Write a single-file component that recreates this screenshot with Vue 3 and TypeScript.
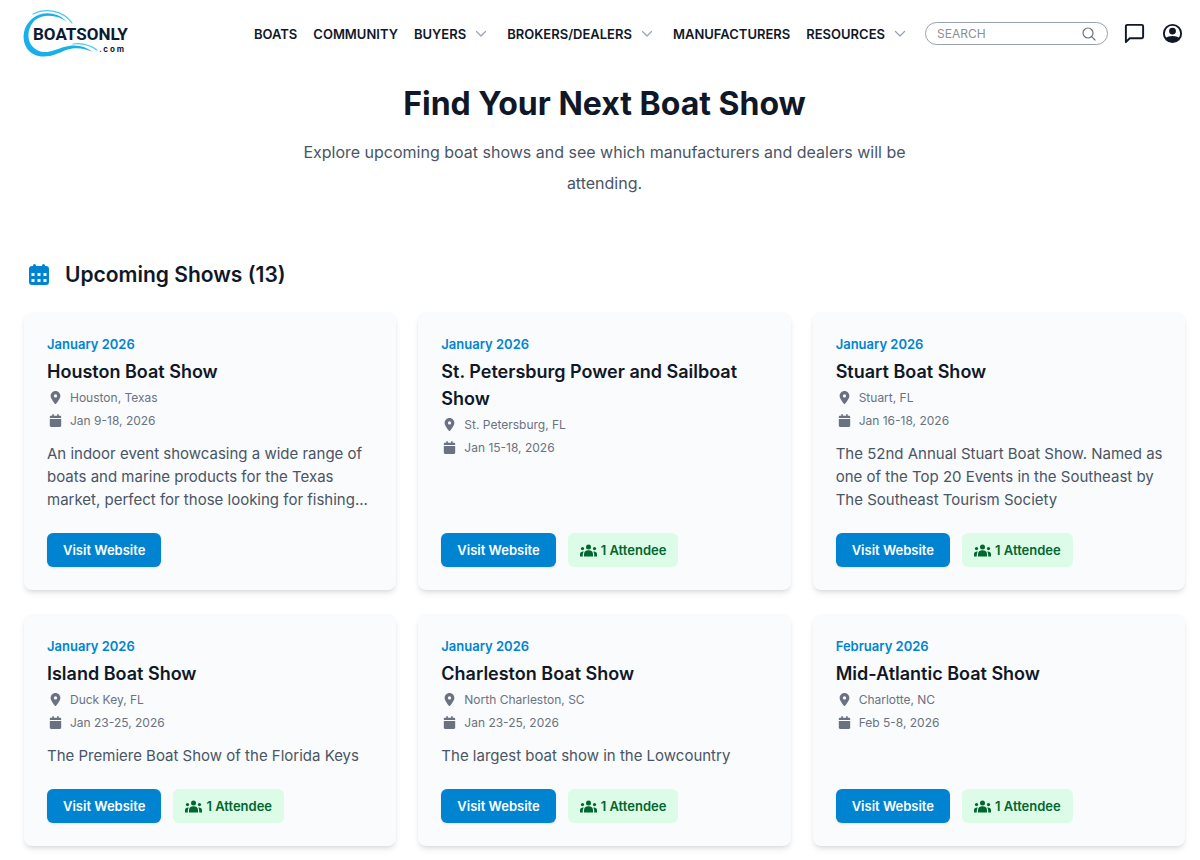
<script setup lang="ts">
import { ref } from 'vue'

interface NavItem {
  label: string
  menu: boolean
}

interface Show {
  month: string
  title: string
  place: string
  dates: string
  text: string
  attendees: number
}

const query = ref('')

const nav: NavItem[] = [
  { label: 'BOATS', menu: false },
  { label: 'COMMUNITY', menu: false },
  { label: 'BUYERS', menu: true },
  { label: 'BROKERS/DEALERS', menu: true },
  { label: 'MANUFACTURERS', menu: false },
  { label: 'RESOURCES', menu: true },
]

const total = 13

const shows: Show[] = [
  {
    month: 'January 2026',
    title: 'Houston Boat Show',
    place: 'Houston, Texas',
    dates: 'Jan 9-18, 2026',
    text: 'An indoor event showcasing a wide range of boats and marine products for the Texas market, perfect for those looking for fishing...',
    attendees: 0,
  },
  {
    month: 'January 2026',
    title: 'St. Petersburg Power and Sailboat Show',
    place: 'St. Petersburg, FL',
    dates: 'Jan 15-18, 2026',
    text: '',
    attendees: 1,
  },
  {
    month: 'January 2026',
    title: 'Stuart Boat Show',
    place: 'Stuart, FL',
    dates: 'Jan 16-18, 2026',
    text: 'The 52nd Annual Stuart Boat Show. Named as one of the Top 20 Events in the Southeast by The Southeast Tourism Society',
    attendees: 1,
  },
  {
    month: 'January 2026',
    title: 'Island Boat Show',
    place: 'Duck Key, FL',
    dates: 'Jan 23-25, 2026',
    text: 'The Premiere Boat Show of the Florida Keys',
    attendees: 1,
  },
  {
    month: 'January 2026',
    title: 'Charleston Boat Show',
    place: 'North Charleston, SC',
    dates: 'Jan 23-25, 2026',
    text: 'The largest boat show in the Lowcountry',
    attendees: 1,
  },
  {
    month: 'February 2026',
    title: 'Mid-Atlantic Boat Show',
    place: 'Charlotte, NC',
    dates: 'Feb 5-8, 2026',
    text: '',
    attendees: 1,
  },
]
</script>

<template>
  <div class="page">
    <header class="header">
      <a class="logo" href="#" aria-label="BoatsOnly.com">
        <svg width="108" height="50" viewBox="0 0 108 50">
          <path d="M43 13C33 2 18 2 9 9C-4 19 -3 38 9 45C21 51 33 45 42 41C51 38 60 39 69 43C60 36 50 35 40 38C30 41 22 46 13 41C2 35 2 20 11 11C19 5 33 5 43 13Z" fill="#18b0e8" />
          <path d="M9 5C21 -1 39 1 48 14" fill="none" stroke="#4cc8f0" stroke-width="1.200" stroke-linecap="round" />
          <path d="M49 35C58 33.500 66 36 73 41" fill="none" stroke="#4cc8f0" stroke-width="1.200" stroke-linecap="round" />
          <text class="logo-name" x="9" y="31">BOATSONLY</text>
          <text class="logo-tld" x="75" y="43">. c o m</text>
        </svg>
      </a>

      <nav class="nav" aria-label="Main">
        <template v-for="item in nav" :key="item.label">
          <button v-if="item.menu" type="button" class="nav-item nav-menu">
            {{ item.label }}
            <svg width="12" height="8" viewBox="0 0 12 8" fill="none" stroke="#99a1af" stroke-width="1.200" stroke-linecap="round" stroke-linejoin="round">
              <path d="M1.500 1.500L6 6L10.500 1.500" />
            </svg>
          </button>
          <a v-else href="#" class="nav-item">{{ item.label }}</a>
        </template>
      </nav>

      <label class="search">
        <input v-model="query" type="search" placeholder="SEARCH" aria-label="Search" />
        <svg width="14" height="14" viewBox="0 0 14 14" fill="none" stroke="#6a7282" stroke-width="1.200" stroke-linecap="round">
          <circle cx="6" cy="6" r="5" />
          <path d="M9.700 9.700L13 13" />
        </svg>
      </label>

      <button type="button" class="icon-button" aria-label="Messages">
        <svg width="23" height="23" viewBox="0 0 24 24" fill="none" stroke="#101828" stroke-width="2" stroke-linejoin="round">
          <path d="M21 15.500a1.500 1.500 0 0 1-1.500 1.500H7l-4 4V4.500A1.500 1.500 0 0 1 4.500 3h15A1.500 1.500 0 0 1 21 4.500z" />
        </svg>
      </button>
      <button type="button" class="icon-button" aria-label="Account">
        <svg width="23" height="23" viewBox="0 0 24 24">
          <circle cx="12" cy="12" r="9" fill="none" stroke="#101828" stroke-width="2" />
          <circle cx="12" cy="9.500" r="3.600" fill="#101828" />
          <path d="M4.500 17C6.500 15.300 9 14.600 12 14.600S17.500 15.300 19.500 17C17.500 20 14.700 21 12 21S6.500 20 4.500 17Z" fill="#101828" />
        </svg>
      </button>
    </header>

    <main class="main">
      <section class="hero">
        <h1>Find Your Next Boat Show</h1>
        <p>Explore upcoming boat shows and see which manufacturers and dealers will be attending.</p>
      </section>

      <h2 class="section-title">
        <svg width="22" height="22" viewBox="0 0 22 22">
          <rect x="1" y="2" width="20" height="19" rx="3" fill="#0084d1" />
          <rect x="5" y="0" width="3" height="5" rx="1.500" fill="#0084d1" />
          <rect x="14" y="0" width="3" height="5" rx="1.500" fill="#0084d1" />
          <g fill="#fff">
            <rect x="3.500" y="9" width="3" height="3" rx=".5" />
            <rect x="9.500" y="9" width="3" height="3" rx=".5" />
            <rect x="15.500" y="9" width="3" height="3" rx=".5" />
            <rect x="3.500" y="15" width="3" height="3" rx=".5" />
            <rect x="9.500" y="15" width="3" height="3" rx=".5" />
            <rect x="15.500" y="15" width="3" height="3" rx=".5" />
          </g>
        </svg>
        Upcoming Shows ({{ total }})
      </h2>

      <div class="grid">
        <article v-for="show in shows" :key="show.title" class="card">
          <p class="month">{{ show.month }}</p>
          <h3>{{ show.title }}</h3>
          <p class="meta">
            <svg width="17" height="13" viewBox="-141 0 666 512" fill="#6a7282">
              <path d="M215.700 499.200C267 435 384 279.400 384 192C384 86 298 0 192 0S0 86 0 192c0 87.400 117 243 168.300 307.200c12.300 15.300 35.100 15.300 47.400 0zM192 128a64 64 0 1 1 0 128 64 64 0 1 1 0-128z" />
            </svg>
            {{ show.place }}
          </p>
          <p class="meta">
            <svg width="17" height="13" viewBox="-111 0 670 512" fill="#6a7282">
              <path d="M96 32V64H48C21.500 64 0 85.500 0 112v48H448V112c0-26.500-21.500-48-48-48H352V32c0-17.700-14.300-32-32-32s-32 14.300-32 32V64H160V32c0-17.700-14.300-32-32-32S96 14.300 96 32zM448 192H0V464c0 26.500 21.500 48 48 48H400c26.500 0 48-21.500 48-48V192z" />
            </svg>
            {{ show.dates }}
          </p>
          <p v-if="show.text" class="text">{{ show.text }}</p>
          <div class="actions">
            <a href="#" class="visit">Visit Website</a>
            <button v-if="show.attendees" type="button" class="attendees">
              <svg width="17" height="13" viewBox="0 0 17 13" fill="#016630">
                <circle cx="8.500" cy="2.900" r="2.500" />
                <path d="M4 12.500V10.300C4 7.800 5.600 6.300 8.500 6.300S13 7.800 13 10.300V12.500Z" />
                <circle cx="2.500" cy="4.600" r="1.600" />
                <circle cx="14.500" cy="4.600" r="1.600" />
                <path d="M0 12.500V10C0 8.200 1.300 7.300 3.800 7.400C3.100 8.300 2.800 9.300 2.800 10.400V12.500Z" />
                <path d="M17 12.500V10C17 8.200 15.700 7.300 13.200 7.400C13.900 8.300 14.200 9.300 14.200 10.400V12.500Z" />
              </svg>
              {{ show.attendees }} Attendee
            </button>
          </div>
        </article>
      </div>
    </main>
  </div>
</template>

<style>
body {
  background: #fff;
}
</style>

<style scoped>
.page {
  font-family: Inter, "Liberation Sans", sans-serif;
  color: #101828;
  padding: 0 15px 13px 24px;
}

h1,
h2,
h3,
p {
  margin: 0;
}

button {
  font: inherit;
  color: inherit;
  background: none;
  border: 0;
  padding: 0;
  cursor: pointer;
}

a {
  color: inherit;
  text-decoration: none;
}

svg {
  display: block;
  flex-shrink: 0;
}

.header {
  display: flex;
  align-items: center;
  height: 67px;
  padding-right: 1px;
}

.logo svg {
  overflow: visible;
}

.logo-name {
  font: bold 17px Roboto, sans-serif;
  fill: #0b1b33;
}

.logo-tld {
  font: bold 8px Inter, sans-serif;
  fill: #0b1b33;
}

.nav {
  display: flex;
  align-items: center;
  gap: 16px;
  margin-left: auto;
}

.nav-item {
  font-size: 13px;
  line-height: 20px;
  font-weight: 600;
  white-space: nowrap;
}

.nav-menu {
  display: flex;
  align-items: center;
  gap: 9px;
  margin-right: 4px;
}

.search {
  display: flex;
  align-items: center;
  box-sizing: border-box;
  width: 183px;
  height: 23px;
  margin: 0 15px;
  padding: 0 11px;
  border: 1px solid #99a1af;
  border-radius: 12px;
}

.search input {
  flex: 1;
  min-width: 0;
  padding: 0;
  border: 0;
  outline: 0;
  background: none;
  font: 12px/20px Inter, sans-serif;
  color: #101828;
  appearance: none;
}

.search input::placeholder {
  color: #8a8f98;
}

.icon-button + .icon-button {
  margin-left: 15px;
}

.hero {
  max-width: 620px;
  margin: 0 auto;
  padding-top: 17px;
  text-align: center;
}

.hero h1 {
  font-size: 32px;
  line-height: 40px;
  font-weight: 700;
}

.hero p {
  margin-top: 13px;
  font-size: 16px;
  line-height: 31px;
  color: #4a5565;
}

.section-title {
  display: flex;
  align-items: center;
  gap: 15px;
  margin-top: 60px;
  padding-left: 4px;
  font-size: 21px;
  line-height: 32px;
  font-weight: 600;
}

.grid {
  display: grid;
  grid-template-columns: repeat(3, minmax(0, 1fr));
  gap: 24px 22px;
  margin-top: 21px;
}

.card {
  display: flex;
  flex-direction: column;
  padding: 23px 15px 23px 23px;
  background: #f9fbfc;
  border-radius: 8px;
  box-shadow: 0 4px 6px -1px rgb(0 0 0 / 10%), 0 2px 4px -2px rgb(0 0 0 / 10%);
}

.month {
  font-size: 13px;
  line-height: 18px;
  font-weight: 600;
  color: #0084d1;
}

.card h3 {
  margin: 5px 0 1px;
  font-size: 18px;
  line-height: 27px;
  font-weight: 600;
}

.meta {
  display: flex;
  align-items: center;
  gap: 6px;
  font-size: 12px;
  line-height: 23px;
  color: #6a7282;
}

.text {
  margin-top: 10px;
  font-size: 15px;
  line-height: 23px;
  color: #4a5565;
}

.actions {
  display: flex;
  gap: 12px;
  margin-top: auto;
  padding-top: 22px;
}

.visit,
.attendees {
  display: flex;
  align-items: center;
  height: 34px;
  border-radius: 6px;
  font-size: 13px;
  line-height: 20px;
  font-weight: 600;
}

.visit {
  padding: 0 16px;
  background: #0084d1;
  color: #fff;
  box-shadow: 0 1px 2px rgb(0 0 0 / 10%);
}

.attendees {
  gap: 4px;
  padding: 0 12px;
  background: #dcfce7;
  color: #016630;
}
</style>
